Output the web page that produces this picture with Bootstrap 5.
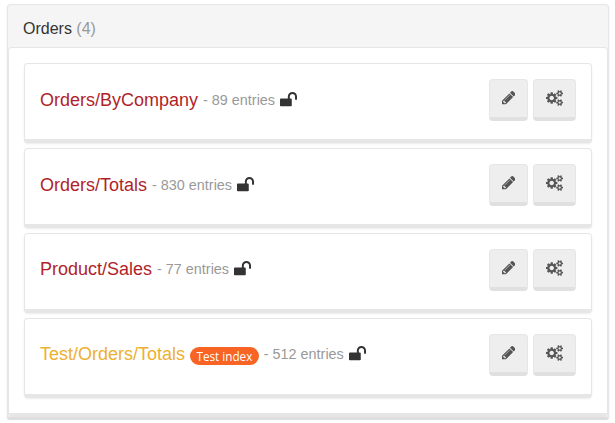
<!DOCTYPE html>
<html lang="en">
<head>
<meta charset="utf-8">
<meta name="viewport" content="width=device-width, initial-scale=1">
<title>Orders</title>
<link href="https://cdn.jsdelivr.net/npm/bootstrap@5.3.0/dist/css/bootstrap.min.css" rel="stylesheet">
<style>
body{font-family:"Liberation Sans",Arial,sans-serif;font-size:14px;line-height:20px;color:#333;background:#fff;overflow:hidden}
.group-panel{margin:4px 6px 0 7px;height:416px;background:#f5f5f5;border:1px solid #e6e6e6;border-bottom:3px solid #dedede;border-radius:4px;box-shadow:0 1px 2px rgba(0,0,0,.12)}
.group-head{height:42px;padding:5px 15px 0;font-size:16px}
.count{color:#999}
.group-body{height:370px;padding:15px;gap:5px;background:#fff;border:1px solid #e6e6e6;border-bottom:4px solid #e6e6e6;border-radius:4px}
.index-item{height:80px;padding:0 15px 4px;background:#fff;border:1px solid #e6e6e6;border-bottom:4px solid #e6e6e6;border-radius:4px;box-shadow:0 1px 2px rgba(0,0,0,.08)}
.index-label{gap:5px}
.index-item:nth-child(n+3) .index-label{padding-bottom:2px}
.index-title{font-size:18px;color:#b01f2a}
.index-title:hover{color:#8c1520}
.index-title.test{color:#edb02f}
.entries{color:#999;font-size:14.4px}
.test-pill{background:#f76423;font:11.7px/18px "Open Sans",sans-serif;height:18px;padding:0 6.500px;margin-top:4px}
.tools{gap:5px}
.tool{height:42px;background:#eee;border:1px solid #e6e6e6;border-bottom:4px solid #e0e0e0;border-radius:4px;color:#555;padding:0}
.tool.edit{width:39px}
.tool.gears{width:43px}
svg{fill:currentColor;display:block}
</style>
</head>
<body>
<svg class="d-none" aria-hidden="true">
<symbol id="unlock" viewBox="0 128 1664 1408"><path d="M1664 576v256q0 26-19 45t-45 19h-64q-26 0-45-19t-19-45v-256q0-106-75-181t-181-75-181 75-75 181v192h96q40 0 68 28t28 68v576q0 40-28 68t-68 28h-960q-40 0-68-28t-28-68v-576q0-40 28-68t68-28h672v-192q0-185 131.500-316.500t316.500-131.500 316.500 131.500 131.500 316.500z"/></symbol>
<symbol id="pencil" viewBox="0 149 1515 1515"><path d="M363 1536l91-91-235-235-91 91v107h128v128h107zM886 608q0-22-22-22-10 0-17 7l-542 542q-7 7-7 17 0 22 22 22 10 0 17-7l542-542q7-7 7-17zM832 416l416 416-832 832h-416v-416zM1515 512q0 53-37 90l-166 166-416-416 166-165q36-38 90-38 53 0 91 38l235 234q37 39 37 91z"/></symbol>
<symbol id="gears" viewBox="0 0 1920 1792"><path d="M896 896q0-106-75-181t-181-75-181 75-75 181 75 181 181 75 181-75 75-181zm768 512q0-52-38-90t-90-38-90 38-38 90q0 53 37.500 90.500t90.500 37.500 90.500-37.500 37.500-90.500zm0-1024q0-52-38-90t-90-38-90 38-38 90q0 53 37.500 90.500t90.500 37.500 90.500-37.500 37.500-90.500zm-384 421v185q0 10-7 19.500t-16 10.500l-155 24q-11 35-32 76 34 48 90 115 7 11 7 20 0 12-7 19-23 30-82.500 89.500t-78.500 59.500q-11 0-21-7l-115-90q-37 19-77 31-11 108-23 155-7 24-30 24h-186q-11 0-20-7.500t-10-17.500l-23-153q-34-10-75-31l-118 89q-7 7-20 7-11 0-21-8-144-133-144-160 0-9 7-19 10-14 41-53t47-61q-23-44-35-82l-152-24q-10-1-17-9.500t-7-19.500v-185q0-10 7-19.500t16-10.500l155-24q11-35 32-76-34-48-90-115-7-11-7-20 0-12 7-20 22-30 82-89t79-59q11 0 21 7l115 90q34-18 77-32 11-108 23-154 7-24 30-24h186q11 0 20 7.500t10 17.500l23 153q34 10 75 31l118-89q8-7 20-7 11 0 21 8 144 133 144 160 0 8-7 19-12 16-42 54t-45 60q23 48 34 82l152 23q10 2 17 10.500t7 19.500zm640 533v140q0 16-149 31-12 27-30 52 51 113 51 138 0 4-4 7-122 71-124 71-8 0-46-47t-52-68q-20 2-30 2t-30-2q-14 21-52 68t-46 47q-2 0-124-71-4-3-4-7 0-25 51-138-18-25-30-52-149-15-149-31v-140q0-16 149-31 13-29 30-52-51-113-51-138 0-4 4-7 4-2 35-20t59-34 30-16q8 0 46 46.500t52 67.500q20-2 30-2t30 2q51-71 92-112l6-2q4 0 124 70 4 3 4 7 0 25-51 138 17 23 30 52 149 15 149 31zm0-1024v140q0 16-149 31-12 27-30 52 51 113 51 138 0 4-4 7-122 71-124 71-8 0-46-47t-52-68q-20 2-30 2t-30-2q-14 21-52 68t-46 47q-2 0-124-71-4-3-4-7 0-25 51-138-18-25-30-52-149-15-149-31v-140q0-16 149-31 13-29 30-52-51-113-51-138 0-4 4-7 4-2 35-20t59-34 30-16q8 0 46 46.500t52 67.500q20-2 30-2t30 2q51-71 92-112l6-2q4 0 124 70 4 3 4 7 0 25-51 138 17 23 30 52 149 15 149 31z"/></symbol>
</svg>
<main class="group-panel">
  <div class="group-head d-flex align-items-center"><span>Orders <span class="count">(4)</span></span></div>
  <div class="group-body d-flex flex-column">
    <div class="index-item d-flex align-items-center justify-content-between">
      <div class="index-label d-flex align-items-center"><a href="#" class="index-title text-decoration-none">Orders/ByCompany</a><span class="entries">- 89 entries</span><svg width="17" height="14.400"><use href="#unlock"/></svg></div>
      <div class="d-flex tools"><button class="tool edit btn d-flex align-items-center justify-content-center" aria-label="Edit"><svg width="13.500" height="13.500"><use href="#pencil"/></svg></button><button class="tool gears btn d-flex align-items-center justify-content-center" aria-label="Settings"><svg width="17.100" height="16"><use href="#gears"/></svg></button></div>
    </div>
    <div class="index-item d-flex align-items-center justify-content-between">
      <div class="index-label d-flex align-items-center"><a href="#" class="index-title text-decoration-none">Orders/Totals</a><span class="entries">- 830 entries</span><svg width="17" height="14.400"><use href="#unlock"/></svg></div>
      <div class="d-flex tools"><button class="tool edit btn d-flex align-items-center justify-content-center" aria-label="Edit"><svg width="13.500" height="13.500"><use href="#pencil"/></svg></button><button class="tool gears btn d-flex align-items-center justify-content-center" aria-label="Settings"><svg width="17.100" height="16"><use href="#gears"/></svg></button></div>
    </div>
    <div class="index-item d-flex align-items-center justify-content-between">
      <div class="index-label d-flex align-items-center"><a href="#" class="index-title text-decoration-none">Product/Sales</a><span class="entries">- 77 entries</span><svg width="17" height="14.400"><use href="#unlock"/></svg></div>
      <div class="d-flex tools"><button class="tool edit btn d-flex align-items-center justify-content-center" aria-label="Edit"><svg width="13.500" height="13.500"><use href="#pencil"/></svg></button><button class="tool gears btn d-flex align-items-center justify-content-center" aria-label="Settings"><svg width="17.100" height="16"><use href="#gears"/></svg></button></div>
    </div>
    <div class="index-item d-flex align-items-center justify-content-between">
      <div class="index-label d-flex align-items-center"><a href="#" class="index-title test text-decoration-none">Test/Orders/Totals</a><span class="test-pill badge rounded-pill">Test index</span><span class="entries">- 512 entries</span><svg width="17" height="14.400"><use href="#unlock"/></svg></div>
      <div class="d-flex tools"><button class="tool edit btn d-flex align-items-center justify-content-center" aria-label="Edit"><svg width="13.500" height="13.500"><use href="#pencil"/></svg></button><button class="tool gears btn d-flex align-items-center justify-content-center" aria-label="Settings"><svg width="17.100" height="16"><use href="#gears"/></svg></button></div>
    </div>
  </div>
</main>
<script src="https://cdn.jsdelivr.net/npm/bootstrap@5.3.0/dist/js/bootstrap.bundle.min.js"></script>
</body>
</html>
